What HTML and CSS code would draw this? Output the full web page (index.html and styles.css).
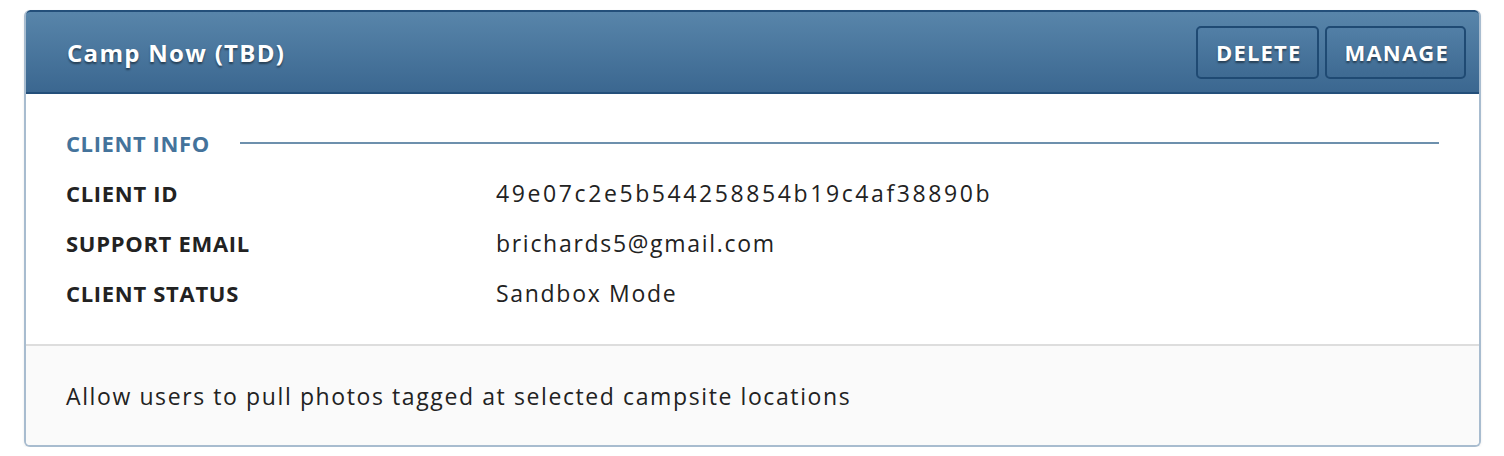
FILE: index.html
```html
<!DOCTYPE html>
<html>
<head>
<meta charset="utf-8">
<link rel="stylesheet" href="styles.css">
</head>
<body>
<div class="panel">
  <div class="panel-header">
    <h2 class="panel-title">Camp Now (TBD)</h2>
    <div class="actions">
      <button class="btn">DELETE</button>
      <button class="btn">MANAGE</button>
    </div>
  </div>
  <div class="panel-body">
    <div class="section-title">
      <span>CLIENT INFO</span>
      <span class="rule"></span>
    </div>
    <div class="row"><div class="label">CLIENT ID</div><div class="value value-id">49e07c2e5b544258854b19c4af38890b</div></div>
    <div class="row"><div class="label">SUPPORT EMAIL</div><div class="value">brichards5@gmail.com</div></div>
    <div class="row"><div class="label">CLIENT STATUS</div><div class="value">Sandbox Mode</div></div>
  </div>
  <div class="panel-footer">Allow users to pull photos tagged at selected campsite locations</div>
</div>
</body>
</html>
```
FILE: styles.css
```css
* { box-sizing: border-box; }
html, body { margin: 0; padding: 0; background: #ffffff; }
body {
  font-family: "Open Sans", "Liberation Sans", sans-serif;
  padding: 10px 23px 0 24px;
  color: #222;
}
.panel {
  border: 2px solid #a8bccf;
  border-top: none;
  border-radius: 6px;
  background: #fff;
  box-shadow: 0 1px 3px rgba(0,0,0,0.08);
  overflow: hidden;
}
.panel-header {
  display: flex;
  align-items: center;
  justify-content: space-between;
  height: 84px;
  margin: 0 -2px;
  padding: 0 13px 0 41px;
  background: linear-gradient(#5885aa, #3b6790);
  border: 2px solid #234f7a;
  border-radius: 6px 6px 0 0;
}
.panel-title {
  margin: 0;
  color: #fff;
  font-size: 24px;
  font-weight: 700;
  letter-spacing: 1.3px;
  text-shadow: 0 2px 2px rgba(0,0,0,0.45);
}
.actions { display: flex; gap: 6px; }
.btn {
  font-family: inherit;
  height: 53px;
  padding: 0 15px 0 18px;
  background: linear-gradient(#527fa6, #3e6a92);
  border: 2px solid #1f4a73;
  border-radius: 5px;
  color: #fff;
  font-size: 22px;
  font-weight: 700;
  letter-spacing: 1.2px;
  text-shadow: 0 2px 2px rgba(0,0,0,0.45);
}
.panel-body {
  padding: 30px 40px 26px 40px;
}
.section-title {
  display: flex;
  align-items: center;
  height: 38px;
  margin-bottom: 6px;
  color: #44739b;
  font-size: 22px;
  font-weight: 700;
  letter-spacing: 0.6px;
}
.rule {
  flex: 1;
  height: 2px;
  background: #6d90ad;
  margin-left: 30px;
}
.row {
  display: flex;
  align-items: center;
  height: 50px;
}
.label {
  width: 430px;
  font-size: 22px;
  font-weight: 700;
  letter-spacing: 0.7px;
  color: #222;
}
.value {
  font-size: 23px;
  letter-spacing: 1.7px;
  color: #222;
}
.value-id { letter-spacing: 2.6px; }
.panel-footer {
  border-top: 2px solid #dddddd;
  background: #fafafa;
  height: 101px;
  padding: 0 40px;
  display: flex;
  align-items: center;
  font-size: 23px;
  letter-spacing: 1.6px;
  color: #222;
}
```
